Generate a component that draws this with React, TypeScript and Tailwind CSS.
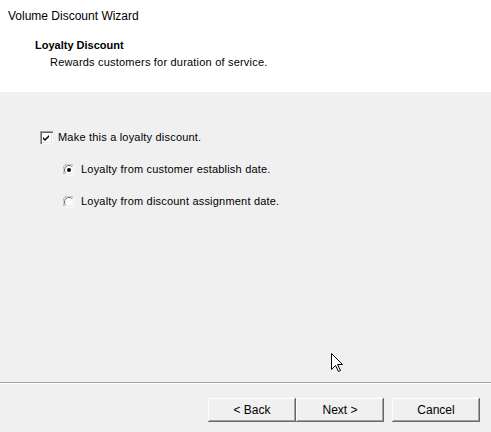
import React from 'react';

const btn =
  'w-[88px] h-[24px] bg-[#f0f0f0] text-[12px] text-black shadow-[inset_-1px_-1px_#696969,inset_1px_1px_#ffffff,inset_-2px_-2px_#a0a0a0] flex items-center justify-center';

const Checkbox: React.FC = () => (
  <div className="w-[13px] h-[13px] bg-white shadow-[inset_1px_1px_#a0a0a0,inset_2px_2px_#696969,inset_-1px_-1px_#ffffff,inset_-2px_-2px_#e3e3e3] flex items-center justify-center">
    <svg width="9" height="9" viewBox="0 0 9 9">
      <path d="M1 4 L3 6 L7 2 L7 4 L3 8 L1 6 Z" fill="#000" />
    </svg>
  </div>
);

const Radio: React.FC<{ checked?: boolean }> = ({ checked }) => (
  <svg width="12" height="12" viewBox="0 0 12 12" className="shrink-0">
    <circle cx="6" cy="6" r="5.5" fill="#fff" />
    <path d="M1.6 10.4 A5.5 5.5 0 0 1 10.4 1.6" fill="none" stroke="#a0a0a0" strokeWidth="1" />
    <path d="M10.4 1.6 A5.5 5.5 0 0 1 1.6 10.4" fill="none" stroke="#ffffff" strokeWidth="1" />
    <path d="M2.8 9.2 A4.5 4.5 0 0 1 9.2 2.8" fill="none" stroke="#696969" strokeWidth="1" />
    <path d="M9.2 2.8 A4.5 4.5 0 0 1 2.8 9.2" fill="none" stroke="#e3e3e3" strokeWidth="1" />
    {checked && <circle cx="6" cy="6" r="2" fill="#000" />}
  </svg>
);

export default function App() {
  return (
    <div className="relative w-[491px] h-[432px] flex flex-col bg-[#f0f0f0] text-black font-['Liberation_Sans',Arial,sans-serif] text-[11px] overflow-hidden">
      {/* Header */}
      <div className="h-[92px] bg-white flex flex-col">
        <div className="pl-[8px] pt-[8px] text-[12px] leading-[16px]">Volume Discount Wizard</div>
        <div className="pl-[35px] mt-[14px] leading-[14px] font-bold">Loyalty Discount</div>
        <div className="pl-[50px] mt-[3px] leading-[14px] tracking-[0.2px]">Rewards customers for duration of service.</div>
      </div>

      {/* Body */}
      <div className="flex-1 flex flex-col tracking-[0.2px]">
        <div className="mt-[39px] pl-[40px] flex items-center gap-[5px] h-[13px]">
          <Checkbox />
          <span className="leading-[13px]">Make this a loyalty discount.</span>
        </div>
        <div className="mt-[19px] pl-[63px] flex items-center gap-[6px] h-[13px]">
          <Radio checked />
          <span className="leading-[13px]">Loyalty from customer establish date.</span>
        </div>
        <div className="mt-[19px] pl-[63px] flex items-center gap-[6px] h-[13px]">
          <Radio />
          <span className="leading-[13px]">Loyalty from discount assignment date.</span>
        </div>
      </div>

      {/* Separator */}
      <div className="h-px bg-[#a0a0a0]" />
      <div className="h-px bg-white" />

      {/* Footer buttons */}
      <div className="flex justify-end pt-[14px] pb-[10px] pr-[11px]">
        <button className={btn}>&lt; Back</button>
        <button className={btn}>Next &gt;</button>
        <button className={`${btn} ml-[8px]`}>Cancel</button>
      </div>

      {/* Mouse cursor */}
      <svg width="13" height="20" viewBox="0 0 13 20" className="absolute left-[331px] top-[353px]">
        <path d="M0.5 0.5 L0.5 16.5 L4.5 12.5 L7.5 18.5 L9.5 17.5 L6.5 11.5 L11.5 11.5 Z" fill="#fff" stroke="#000" strokeWidth="1" />
      </svg>
    </div>
  );
}
